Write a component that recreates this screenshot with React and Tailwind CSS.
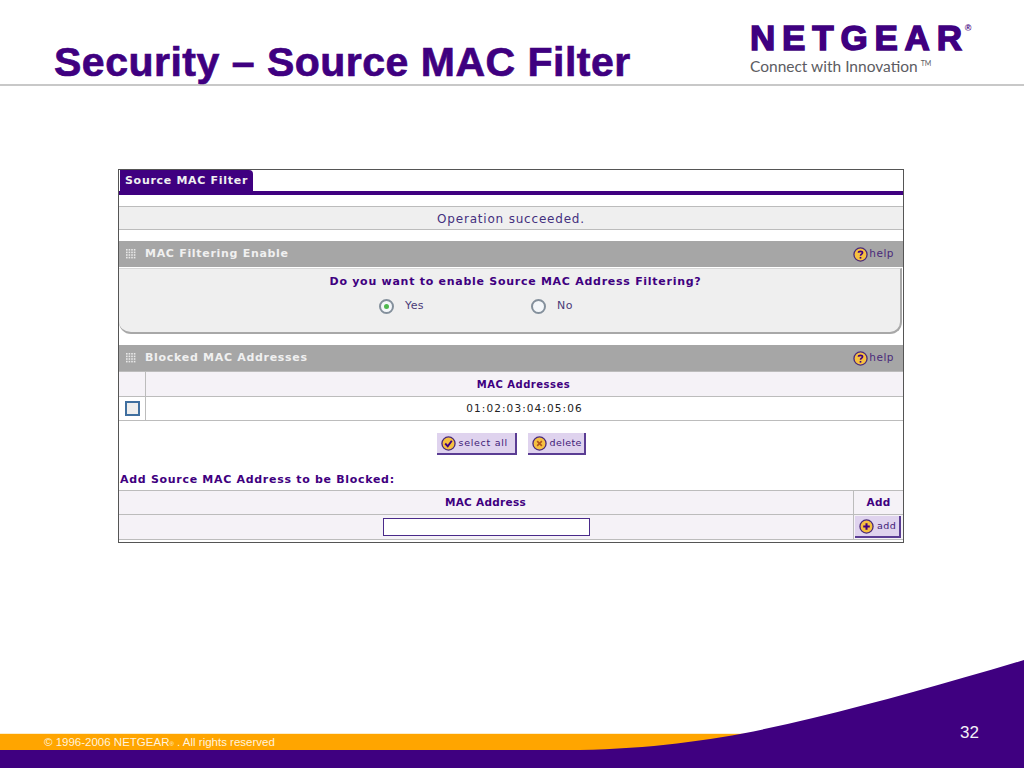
const purple = '#3f0080';

function GripIcon() {
    return (
        <svg width="10" height="10" viewBox="0 0 10 10" className="shrink-0">
            {[0, 1, 2, 3].map((row) =>
                [0, 1, 2, 3].map((col) => (
                    <rect key={`${row}-${col}`} x={col * 2.6} y={row * 2.6} width="1.6" height="1.6" fill="#e8e8e8" />
                ))
            )}
        </svg>
    );
}

function RoundIcon({ size = 14, children }) {
    return (
        <svg width={size} height={size} viewBox="0 0 16 16" className="shrink-0">
            <circle cx="8" cy="8" r="7" fill="#f6c040" stroke="#4a2a7a" strokeWidth="1.4" />
            {children}
        </svg>
    );
}

function HelpLink() {
    return (
        <div className="flex items-center">
            <RoundIcon size={15}>
                <path d="M5.8 6.2C5.8 4.2 10.2 4.2 10.2 6.2C10.2 7.6 8 7.6 8 9.4" fill="none" stroke="#3f0080" strokeWidth="1.7" />
                <rect x="7.1" y="10.6" width="1.8" height="1.8" fill="#3f0080" />
            </RoundIcon>
            <span className="text-[#4a2a7a] text-[10.5px] tracking-[0.5px] ml-px">help</span>
        </div>
    );
}

function SectionBar({ title }) {
    return (
        <div className="h-[26px] bg-[#a6a6a6] flex items-center justify-between pl-[7px] pr-[9px]">
            <div className="flex items-center gap-[9px]">
                <GripIcon />
                <span className="text-[#f0f0f0] text-[11px] font-bold tracking-[0.7px]">{title}</span>
            </div>
            <HelpLink />
        </div>
    );
}

function ActionButton({ icon, label, width, tracking }) {
    return (
        <div className={`${width} h-[22px] bg-[#dfd3ee] border-r-2 border-b-2 border-[#5b3d94] flex items-center pl-[4px] gap-[3px]`}>
            <RoundIcon size={15}>{icon}</RoundIcon>
            <span className={`text-[#3f1a78] text-[9.5px] ${tracking}`}>{label}</span>
        </div>
    );
}

const checkMark = <path d="M4.5 8L7.2 11L11.5 5" fill="none" stroke="#3f0080" strokeWidth="2" />;
const crossMark = <path d="M5.5 5.5L10.5 10.5M10.5 5.5L5.5 10.5" fill="none" stroke="#b0551c" strokeWidth="1.7" />;
const plusMark = <path d="M8 4.5V11.5M4.5 8H11.5" fill="none" stroke="#3f0080" strokeWidth="2.2" />;

function RadioOption({ label, checked, width }) {
    return (
        <div className={`${width} flex items-center gap-[11px]`}>
            <div className="w-[15px] h-[15px] rounded-full border-2 border-[#84909c] bg-[#f4f7fa] flex items-center justify-center">
                {checked && <div className="w-[5px] h-[5px] rounded-full bg-[#4fb84f]" />}
            </div>
            <span className="text-[#4a3a78] text-[11px] tracking-[0.4px]">{label}</span>
        </div>
    );
}

export default function App() {
    return (
        <main className="relative w-[1024px] h-[768px] bg-white overflow-hidden flex flex-col font-['Liberation_Sans',sans-serif]">
            {/* Slide header */}
            <header className="h-[86px] shrink-0 border-b-2 border-[#c8c8c8] flex justify-between pl-[54px] pr-[54px]">
                <h1 className="mt-[38px] text-[41px] leading-[48px] font-bold text-[#3f0080] [-webkit-text-stroke:0.7px_#3f0080] tracking-[0.5px] whitespace-nowrap">
                    Security – Source MAC Filter
                </h1>
                <div className="mt-[20px] w-[220px] shrink-0">
                    <div className="flex h-[36px] text-[#3f0080] text-[35px] leading-[36px] font-bold [-webkit-text-stroke:1.5px_#3f0080] whitespace-nowrap">
                        <span className="tracking-[6.8px]">NETGEAR</span>
                        <span className="-ml-[4px] -mt-[10px] text-[9px] [-webkit-text-stroke:0px]">®</span>
                    </div>
                    <div className="-mt-[2px] text-[15.5px] leading-[18px] text-[#5c5c62] font-['Lato',sans-serif] whitespace-nowrap">
                        Connect with Innovation<span className="text-[7px] align-[6px] ml-[3px]">TM</span>
                    </div>
                </div>
            </header>

            {/* Router admin screenshot */}
            <section className="ml-[118px] mt-[83px] w-[786px] h-[374px] border border-[#555555] bg-white text-[#3f0080] font-['DejaVu_Sans',sans-serif] flex flex-col">
                <div className="h-[25px] border-b-4 border-[#3f0080] pl-px">
                    <div className="h-[21px] w-[133px] bg-[#3f0080] rounded-tr-sm text-[#f0f0f0] text-[11px] font-bold tracking-[0.7px] leading-[21px] pl-[5px]">
                        Source MAC Filter
                    </div>
                </div>

                <div className="mt-[11px] h-[24px] bg-[#efefef] border-y border-[#bcbcbc] flex items-center justify-center pt-px text-[12px] text-[#44307e] tracking-[0.8px]">
                    Operation succeeded.
                </div>

                <div className="mt-[11px]">
                    <SectionBar title="MAC Filtering Enable" />
                </div>
                <div className="mt-px mr-px h-[66px] bg-[#efefef] border-t border-[#d8d8d8] border-r-2 border-b-2 border-r-[#a8a8a8] border-b-[#a8a8a8] rounded-b-[12px] pt-[5px] flex flex-col items-center">
                    <div className="text-[11px] font-bold tracking-[0.73px] leading-[16px] pl-[12px]">Do you want to enable Source MAC Address Filtering?</div>
                    <div className="mt-[8px] flex pr-[64px]">
                        <RadioOption label="Yes" checked width="w-[152px]" />
                        <RadioOption label="No" width="w-[45px]" />
                    </div>
                </div>

                <div className="mt-[11px]">
                    <SectionBar title="Blocked MAC Addresses" />
                </div>
                <div className="flex h-[26px] bg-[#f5f2f7] border-y border-[#bcbcbc]">
                    <div className="w-[27px] border-r border-[#bcbcbc]" />
                    <div className="flex-1 flex items-center justify-center pr-[2px] text-[10px] font-bold tracking-[0.5px]">MAC Addresses</div>
                </div>
                <div className="flex h-[24px] border-b border-[#bcbcbc]">
                    <div className="w-[27px] border-r border-[#bcbcbc] flex items-center justify-center">
                        <div className="w-[15px] h-[15px] border-2 border-[#3f6f9f] bg-[#eeeeee]" />
                    </div>
                    <div className="flex-1 flex items-center justify-center text-[10.5px] text-[#222222] tracking-[1.1px]">01:02:03:04:05:06</div>
                </div>

                <div className="mt-[12px] flex justify-center gap-[11px]">
                    <ActionButton icon={checkMark} label="select all" width="w-[80px]" tracking="tracking-[0.7px]" />
                    <ActionButton icon={crossMark} label="delete" width="w-[58px]" tracking="tracking-[0.4px]" />
                </div>

                <div className="mt-[17px] h-[16px] pl-px text-[11px] leading-[16px] font-bold tracking-[0.7px]">Add Source MAC Address to be Blocked:</div>

                <div className="mt-[2px] flex h-[25px] bg-[#f5f2f7] border-y border-[#bcbcbc] text-[10.5px] font-bold tracking-[0.3px]">
                    <div className="flex-1 border-r border-[#bcbcbc] flex items-center justify-center pr-[1px]">MAC Address</div>
                    <div className="w-[49px] flex items-center justify-center">Add</div>
                </div>
                <div className="flex h-[25px] bg-[#f5f2f7] border-b border-[#bcbcbc]">
                    <div className="flex-1 border-r border-[#bcbcbc] flex items-center justify-center">
                        <div className="w-[207px] h-[18px] bg-white border border-[#4a2a8a]" />
                    </div>
                    <div className="w-[49px] pl-[1px] pt-px">
                        <ActionButton icon={plusMark} label="add" width="w-[46px]" tracking="tracking-[0.4px]" />
                    </div>
                </div>
            </section>

            {/* Slide footer */}
            <svg width="1024" height="118" viewBox="0 0 1024 118" className="absolute left-0 bottom-0">
                <rect x="0" y="83" width="745" height="1" fill="#fdeecb" />
                <rect x="0" y="84" width="760" height="16" fill="#ffa500" />
                <path d="M1024 10C950 32 880 52 813 68C740 86 670 98 580 100L0 100L0 118L1024 118Z" fill={purple} />
            </svg>
            <div className="absolute left-[44px] top-[736px] text-[11.5px] leading-[13px] text-[#fff3dc]">
                © 1996-2006 NETGEAR<span className="text-[6px]">®</span> . All rights reserved
            </div>
            <div className="absolute left-[960px] top-[724px] text-[17px] leading-[18px] text-[#f4f0f8]">32</div>
        </main>
    );
}
